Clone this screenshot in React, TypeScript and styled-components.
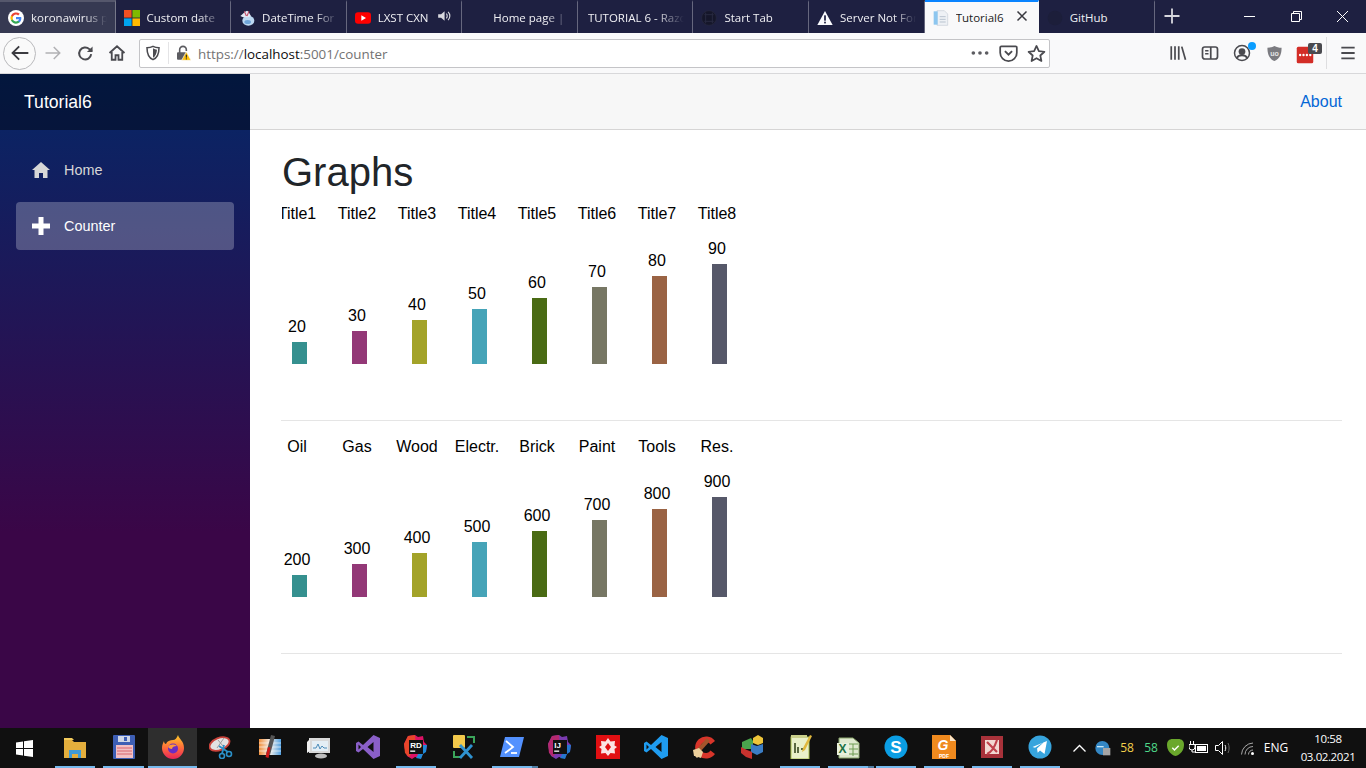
import React from "react";
import styled, { createGlobalStyle } from "styled-components";

const Global = createGlobalStyle`
  html, body { margin: 0; padding: 0; overflow: hidden; background: #fff; }
  * { box-sizing: border-box; }
`;

const Shell = styled.div`
  width: 1366px; height: 768px; display: flex; flex-direction: column; overflow: hidden;
  font-family: "Liberation Sans", Arial, sans-serif;
`;

/* ---------- browser tab strip ---------- */
const TabStrip = styled.div`
  height: 33px; display: flex; background: #1e2041; flex: none;
  font-family: "Open Sans", "Noto Sans", sans-serif; font-size: 11.5px;
`;
const Tab = styled.div<{ $active?: boolean; $hover?: boolean; $width?: number; $plain?: boolean }>`
  width: ${p => p.$width ?? 115.6}px; flex: none; height: 33px; display: flex; align-items: center;
  gap: 7px; padding-left: ${p => (p.$plain ? 10 : 8)}px; position: relative;
  color: ${p => (p.$active ? "#1c1b22" : "#f0f0f4")};
  background: ${p => (p.$active ? "#f9f9fa" : p.$hover ? "#363952" : "transparent")};
  border-right: 1px solid ${p => (p.$active ? "transparent" : "rgba(255,255,255,.32)")};
  border-top: 2px solid ${p => (p.$active ? "#0a84ff" : p.$hover ? "#55576c" : "transparent")};
`;
const TabTitle = styled.span<{ $fade?: boolean }>`
  white-space: nowrap; overflow: hidden; flex: 1; min-width: 0; margin-right: 8px;
  ${p => p.$fade && "mask-image: linear-gradient(90deg,#000 70%,transparent 100%);"}
`;
const FaviconBox = styled.span`
  width: 16px; height: 16px; flex: none; display: flex; align-items: center; justify-content: center;
`;
const CloseMark = styled.span`
  position: absolute; right: 10px; top: 8px; display: flex;
`;
const StripRest = styled.div`
  flex: 1; display: flex; align-items: center; color: #f0f0f4;
`;
const NewTab = styled.div`
  width: 34px; display: flex; justify-content: center; padding-bottom: 1px;
`;
const WinButtons = styled.div`
  margin-left: auto; display: flex;
`;
const WinBtn = styled.div`
  width: 46.5px; height: 33px; display: flex; align-items: center; justify-content: center; padding-bottom: 1px;
`;

/* ---------- toolbar ---------- */
const Toolbar = styled.div`
  height: 41px; flex: none; display: flex; align-items: center; background: #f9f9fa;
  border-bottom: 1px solid #d8d8da; padding-left: 3px;
`;
const BackBtn = styled.div`
  width: 33px; height: 33px; border-radius: 50%; border: 1px solid #b9b9bc; background: #fafafa;
  display: flex; align-items: center; justify-content: center; flex: none; margin-right: 1px;
`;
const ToolBtn = styled.div`
  width: 32px; height: 32px; flex: none; display: flex; align-items: center; justify-content: center; position: relative;
`;
const UrlBar = styled.div`
  width: 911px; height: 29px; margin-left: 6px; margin-right: 112px; flex: none; display: flex; align-items: center;
  background: #fff; border: 1px solid #c4c4c7; border-radius: 2px; padding-left: 5px;
  font-family: "Open Sans", "Noto Sans", sans-serif; font-size: 13.4px; color: #737373;
`;
const UrlDivider = styled.span`
  width: 1px; height: 22px; background: #e4e4e6; margin: 0 6px 0 7px; flex: none;
`;
const UrlText = styled.div`
  margin-left: 7px; flex: 1; white-space: nowrap; padding-top: 1px;
  b { color: #0c0c0d; font-weight: 400; }
`;
const UrlEnd = styled.div`
  display: flex; align-items: center; gap: 9px; padding-right: 3px;
`;
const ToolSep = styled.span`
  width: 1px; height: 32px; background: #dedee0; margin: 0 5px 0 4px; flex: none;
`;
const BadgeCount = styled.span`
  position: absolute; left: 18px; top: 6px; width: 14px; height: 11px; background: #4a4a4f; color: #fff;
  font: bold 10px/11px "Liberation Sans", sans-serif; text-align: center; border-radius: 2px;
`;
const AccountDot = styled.span`
  position: absolute; right: 2px; top: 5px; width: 8px; height: 8px; border-radius: 50%; background: #0a9dff;
`;

/* ---------- blazor page ---------- */
const Page = styled.div`
  flex: 1; display: flex; min-height: 0;
`;
const Sidebar = styled.aside`
  width: 250px; flex: none; background: linear-gradient(180deg, rgb(5,39,103) 0%, #3a0647 70%);
`;
const Brand = styled.div`
  height: 56px; background: rgba(0,0,0,.4); color: #fff; font-size: 17.6px; display: flex; align-items: center; padding-left: 24px;
`;
const Nav = styled.nav`
  padding: 16px 16px 0;
`;
const NavLink = styled.a<{ $active?: boolean }>`
  height: 48px; margin-bottom: 8px; display: flex; align-items: center; border-radius: 4px;
  padding-left: 16px; font-size: 14.4px;
  color: ${p => (p.$active ? "#fff" : "#d7d7d7")};
  background: ${p => (p.$active ? "rgba(255,255,255,.25)" : "transparent")};
`;
const NavIcon = styled.span`
  width: 20px; margin-right: 12px; display: flex; justify-content: flex-start; flex: none;
`;
const Main = styled.main`
  flex: 1; min-width: 0; display: flex; flex-direction: column;
`;
const TopRow = styled.div`
  height: 56px; flex: none; background: #f7f7f7; border-bottom: 1px solid #d6d5d5; display: flex;
  align-items: center; justify-content: flex-end; padding-right: 24px;
`;
const AboutLink = styled.a`
  color: #0366d6; font-size: 16px;
`;
const Content = styled.div`
  padding: 17.6px 24px 0 32px;
`;
const Title = styled.h1`
  margin: 0 0 8px; font-size: 40px; line-height: 48px; font-weight: 400; color: #212529;
`;
const ChartSvg = styled.svg`
  display: block; width: 600px; height: 200px; overflow: hidden;
  font-family: "Liberation Sans", Arial, sans-serif; font-size: 16px; fill: #000;
`;
const Rule = styled.hr`
  margin: 16px 0 16px -1px; border: 0; border-top: 1px solid rgba(0,0,0,.1); height: 0;
`;

/* ---------- taskbar ---------- */
const Taskbar = styled.div`
  height: 40px; flex: none; display: flex; background: #101010; color: #fff;
  font-family: "Open Sans", "Noto Sans", sans-serif; font-size: 12px;
`;
const StartBtn = styled.div`
  width: 50.6px; flex: none; display: flex; align-items: center; padding-left: 16px;
`;
const Slot = styled.div<{ $w: number; $run?: boolean; $active?: boolean; $stack?: boolean }>`
  width: ${p => p.$w}px; height: 40px; flex: none; display: flex; align-items: center; justify-content: center;
  position: relative; padding-bottom: 2px;
  background: ${p => (p.$active ? "#2e2e2e" : "transparent")};
  ${p => p.$run && `&::after {
    content: ""; position: absolute; bottom: 0; height: 2px; background: #76b9ed;
    left: ${p.$active ? 0 : 4}px; right: ${p.$active ? 0 : 4}px;
  }`}
  ${p => p.$stack && `&::before {
    content: ""; position: absolute; bottom: 0; height: 2px; background: #4f7ea3;
    right: -2px; width: 7px;
  }`}
`;
const Tray = styled.div`
  margin-left: auto; display: flex; align-items: center;
`;
const TrayItem = styled.div<{ $w: number; $color?: string }>`
  width: ${p => p.$w}px; display: flex; align-items: center; justify-content: center;
  color: ${p => p.$color ?? "#fff"}; flex: none; padding-bottom: 1px;
`;
const Clock = styled.div`
  width: 60px; margin: 0 8px 0 7px; text-align: center; line-height: 18px; flex: none; white-space: nowrap;
  font-size: 11.5px; letter-spacing: -0.4px;
`;

/* ---------- icons ---------- */
type SvgP = { s?: number; c?: string };
const I: React.FC<React.SVGProps<SVGSVGElement> & { s?: number }> = ({ s = 16, children, ...r }) => (
  <svg width={s} height={s} viewBox="0 0 24 24" fill="none" {...r}>{children}</svg>
);

const GoogleIcon = () => (
  <I s={16}>
    <circle cx="12" cy="12" r="12" fill="#fff" />
    <path d="M20 12.2c0-.6-.1-1.2-.2-1.7H12v3.3h4.5a3.9 3.9 0 0 1-1.7 2.5v2.1h2.7c1.6-1.5 2.5-3.6 2.5-6.2z" fill="#4285f4" />
    <path d="M12 20.5c2.3 0 4.2-.8 5.5-2.1l-2.7-2.1c-.7.5-1.7.8-2.8.8-2.2 0-4-1.5-4.7-3.4H4.5v2.1A8.5 8.5 0 0 0 12 20.5z" fill="#34a853" />
    <path d="M7.3 13.7a5 5 0 0 1 0-3.4V8.2H4.5a8.5 8.5 0 0 0 0 7.6z" fill="#fbbc05" />
    <path d="M12 6.9c1.2 0 2.3.4 3.2 1.2l2.4-2.4A8.5 8.5 0 0 0 4.5 8.2l2.8 2.1C8 8.4 9.8 6.9 12 6.9z" fill="#ea4335" />
  </I>
);
const MsIcon = () => (
  <I s={16}>
    <rect x="0" y="0" width="11.4" height="11.4" fill="#f25022" />
    <rect x="12.6" y="0" width="11.4" height="11.4" fill="#7fba00" />
    <rect x="0" y="12.6" width="11.4" height="11.4" fill="#00a4ef" />
    <rect x="12.6" y="12.6" width="11.4" height="11.4" fill="#ffb900" />
  </I>
);
const BlobIcon = () => (
  <I s={16}>
    <ellipse cx="14" cy="16" rx="9" ry="7.500" fill="#bcd8f2" />
    <path d="M2 9c3-2 6-7 10-8 3 1 4 5 6 8-3 2-12 3-16 0z" fill="#e3e8f4" />
    <path d="M8 2l3 7M15 2l-3 7" stroke="#c4506a" strokeWidth="1.600" />
    <ellipse cx="13" cy="18" rx="5" ry="3" fill="#6fa5d9" />
  </I>
);
const YoutubeIcon = () => (
  <I s={16}>
    <rect x="0" y="3.500" width="24" height="17" rx="4.500" fill="#f00" />
    <path d="M9.500 8l7 4-7 4z" fill="#fff" />
  </I>
);
const SpeakerTab = () => (
  <I s={14} style={{ position: "absolute", left: 90, top: 7 }}>
    <path d="M2 9h5l6-5v16l-6-5H2z" fill="#d8d8de" />
    <path d="M16 8c2 2 2 6 0 8M19 5c4 4 4 10 0 14" stroke="#d8d8de" strokeWidth="2" />
  </I>
);
const DarkGlobe = () => (
  <I s={16}>
    <circle cx="12" cy="12" r="11" fill="#15162a" stroke="#282a40" />
    <path d="M5 7h14M5 17h14M7 4v16M17 4v16" stroke="#282a40" strokeWidth="1.500" />
  </I>
);
const GhostMark = () => (
  <I s={16}>
    <circle cx="12" cy="12" r="11" fill="#1c1e3a" />
  </I>
);
const WarnIcon = () => (
  <I s={16}>
    <path d="M12 1.500L23.500 22.500H.5z" fill="#fbfbfe" strokeLinejoin="round" />
    <rect x="10.700" y="8" width="2.600" height="8" fill="#1e2041" />
    <rect x="10.700" y="17.500" width="2.600" height="2.600" fill="#1e2041" />
  </I>
);
const DocIcon = () => (
  <I s={16}>
    <path d="M6 1h11l5 5v17H6z" fill="#eef1f5" stroke="#c7ced8" />
    <rect x="1" y="2" width="6" height="20" fill="#8dc6ef" />
    <path d="M10 10h9M10 14h9M10 18h9" stroke="#b9c3cf" strokeWidth="1.500" />
  </I>
);
const CloseX: React.FC<SvgP> = ({ s = 12, c = "#3a3a40" }) => (
  <I s={s}><path d="M3 3l18 18M21 3L3 21" stroke={c} strokeWidth="3" /></I>
);
const PlusMark = () => (
  <I s={18}><path d="M12 2v20M2 12h20" stroke="#d7d7de" strokeWidth="2.400" /></I>
);
const MinMark = () => (
  <svg width="11" height="11" viewBox="0 0 11 11"><path d="M0 5.500h11" stroke="#fff" /></svg>
);
const RestoreMark = () => (
  <svg width="11" height="11" viewBox="0 0 11 11" fill="none"><path d="M.5 2.500h8v8h-8zM2.500 2.500v-2h8v8h-2" stroke="#fff" /></svg>
);
const WinClose = () => (
  <svg width="11" height="11" viewBox="0 0 11 11" fill="none"><path d="M0 0l11 11M11 0L0 11" stroke="#fff" /></svg>
);

const stroke = "#4a4a4f";
const BackArrow = () => (
  <I s={20}><path d="M22 12H3M11 4l-8 8 8 8" stroke="#3b3b40" strokeWidth="2.200" /></I>
);
const ForwardArrow = () => (
  <I s={18}><path d="M2 12h19M13 4l8 8-8 8" stroke="#b1b1b4" strokeWidth="2" /></I>
);
const Reload = () => (
  <I s={17}>
    <path d="M20 13a8.500 8.500 0 1 1-2.600-7.200L21 9" stroke={stroke} strokeWidth="2.800" />
    <path d="M22 2v8h-8z" fill={stroke} />
  </I>
);
const HomeGlyph = () => (
  <I s={18}>
    <path d="M2 12L12 3l10 9M5 10.500V21h5v-6h4v6h5V10.500" stroke={stroke} strokeWidth="2.400" />
  </I>
);
const ShieldOutline = () => (
  <I s={16}>
    <path d="M12 2c3 1.500 6 2 9 2 0 8-2 15-9 18C5 19 3 12 3 4c3 0 6-.5 9-2z" stroke={stroke} strokeWidth="2.300" />
    <path d="M12 5v14c4-2 5.500-7 6-12-2 0-4-1-6-2z" fill={stroke} />
  </I>
);
const LockWarn = () => (
  <I s={16}>
    <path d="M7 12V7a5 5 0 0 1 10 0v2" stroke="#5c5c61" strokeWidth="2.400" />
    <rect x="3" y="11" width="14" height="11" rx="1.500" fill="#5c5c61" />
    <path d="M17 10l7 13H10z" fill="#ffc10a" stroke="#f9f9fa" />
    <rect x="16.200" y="14.500" width="1.600" height="4.500" fill="#222" />
    <rect x="16.200" y="20" width="1.600" height="1.600" fill="#222" />
  </I>
);
const Dots = () => (
  <I s={20}>
    <circle cx="4" cy="12" r="2.200" fill="#5c5c61" />
    <circle cx="12" cy="12" r="2.200" fill="#5c5c61" />
    <circle cx="20" cy="12" r="2.200" fill="#5c5c61" />
  </I>
);
const Pocket = () => (
  <I s={19}>
    <path d="M3 3h18a1.500 1.500 0 0 1 1.500 1.500V11a10.500 10.500 0 0 1-21 0V4.500A1.500 1.500 0 0 1 3 3z" stroke={stroke} strokeWidth="2.200" />
    <path d="M7.500 9l4.500 4.500L16.500 9" stroke={stroke} strokeWidth="2.400" />
  </I>
);
const Star = () => (
  <I s={19}>
    <path d="M12 2.500l3 6.500 7 .8-5.200 4.700 1.400 7-6.200-3.600-6.200 3.600 1.400-7L2 9.800 9 9z" stroke={stroke} strokeWidth="2.200" strokeLinejoin="round" />
  </I>
);
const Library = () => (
  <I s={18}>
    <path d="M3 3v18M8 3v18M13 3v18" stroke={stroke} strokeWidth="2.300" />
    <path d="M17 3.500l5 17.500" stroke={stroke} strokeWidth="2.300" />
  </I>
);
const SidebarGlyph = () => (
  <I s={18}>
    <rect x="2" y="4" width="20" height="16" rx="3" stroke={stroke} strokeWidth="2.300" />
    <path d="M13 4v16" stroke={stroke} strokeWidth="2.300" />
    <path d="M5.500 9h4.500M5.500 13h4.500" stroke={stroke} strokeWidth="2" />
  </I>
);
const Account = () => (
  <I s={18}>
    <circle cx="12" cy="12" r="10" stroke={stroke} strokeWidth="2" />
    <circle cx="12" cy="10" r="4.500" fill={stroke} />
    <path d="M5 19c2-5.500 12-5.500 14 0" stroke={stroke} strokeWidth="2.600" />
  </I>
);
const UBlock = () => (
  <I s={17}>
    <path d="M12 1.500c3 1.500 6 2.500 10 2.500 0 8-2 15.500-10 18.500C4 19.500 2 12 2 4c4 0 7-1 10-2.500z" fill="#7b7b80" />
    <text x="12" y="15" textAnchor="middle" fill="#e4e4e4" fontSize="10" fontWeight="bold" fontFamily="Liberation Sans">uo</text>
  </I>
);
const RedDots = () => (
  <I s={18} style={{ marginLeft: -2, marginTop: 4 }}>
    <rect x="1" y="1" width="22" height="22" rx="2" fill="#d32d27" />
    <circle cx="5.500" cy="12" r="1.600" fill="#fff" />
    <circle cx="10" cy="12" r="1.600" fill="#fff" />
    <circle cx="14.500" cy="12" r="1.600" fill="#fff" />
    <circle cx="19" cy="12" r="1.600" fill="#fff" />
  </I>
);
const Burger = () => (
  <I s={16}><path d="M2 4h20M2 12h20M2 20h20" stroke={stroke} strokeWidth="2.800" /></I>
);

const HomeFill = () => (
  <svg width="18" height="16" viewBox="0 0 18 16">
    <path d="M9 0L0 8h2.500v8h4.500v-5h4v5h4.500V8H18z" fill="#d7d7d7" />
  </svg>
);
const PlusFill = () => (
  <svg width="18" height="18" viewBox="0 0 18 18">
    <path d="M6.500 0h5v6.500H18v5h-6.500V18h-5v-6.500H0v-5h6.500z" fill="#fff" />
  </svg>
);

/* taskbar app icons */
const T: React.FC<{ children: React.ReactNode; s?: number }> = ({ children, s = 24 }) => (
  <svg width={s} height={s} viewBox="0 0 24 24" fill="none">{children}</svg>
);
const WinLogo = () => (
  <svg width="17" height="17" viewBox="0 0 17 17">
    <path d="M0 2.400l7-1v6.600H0zM8 1.200L17 0v8H8zM0 9h7v6.600l-7-1zM8 9h9v8l-9-1.200z" fill="#fff" />
  </svg>
);
const Explorer = () => (
  <T>
    <path d="M1 5h8l2 2h12v16H1z" fill="#e3ae3d" />
    <path d="M1 3h8l2 2H1z" fill="#f2ca5c" />
    <path d="M6 15h12v8h-3v-4H9v4H6z" fill="#3f9ad6" />
  </T>
);
const SaveDisk = () => (
  <T>
    <rect x="1" y="0" width="22" height="24" rx="1" fill="#3e5fb5" />
    <rect x="6" y="1" width="12" height="6" fill="#cfd6e6" />
    <rect x="12" y="2" width="3" height="4" fill="#3e5fb5" />
    <rect x="4" y="10" width="17" height="13" fill="#f3c0c4" />
    <path d="M5 13h15M5 16h15M5 19h15" stroke="#d8656f" />
  </T>
);
const Firefox = () => (
  <T>
    <defs>
      <linearGradient id="ffx" x1="0" y1="0" x2="0" y2="1">
        <stop offset="0" stopColor="#ffcb2b" /><stop offset=".5" stopColor="#ff7139" /><stop offset="1" stopColor="#e8245a" />
      </linearGradient>
    </defs>
    <path d="M17 0c1 4 6 6 6 13a11 11 0 0 1-22 0c0-3 1-5 2-7 0 2 1 3 2 3 1-3 4-4 7-4 2 0 4-2 5-5z" fill="url(#ffx)" />
    <circle cx="12" cy="13.500" r="5" fill="#6a2cc4" />
    <path d="M7 12c2-3 6-3 9-1-3 0-5 1-5 3-2 0-3-1-4-2z" fill="#ff9a3c" />
  </T>
);
const Snip = () => (
  <T>
    <ellipse cx="10.500" cy="9" rx="10.500" ry="6" transform="rotate(-22 10.500 9)" fill="#e2e2e2" stroke="#c9423a" strokeWidth="1.800" />
    <path d="M9 5l5 6M15 3L8 13" stroke="#9a9a9a" />
    <path d="M10 11l9 6M15 10l-2 9" stroke="#2b90c8" strokeWidth="1.800" />
    <circle cx="20" cy="19" r="2.500" stroke="#2b90c8" strokeWidth="1.600" />
    <circle cx="13" cy="21" r="2.500" stroke="#2b90c8" strokeWidth="1.600" />
  </T>
);
const Thermo = () => (
  <T>
    <defs>
      <linearGradient id="thm" x1="0" y1="0" x2="1" y2="0">
        <stop offset="0" stopColor="#f08f3c" /><stop offset=".5" stopColor="#f5f0ea" /><stop offset="1" stopColor="#4f9fe0" />
      </linearGradient>
    </defs>
    <rect x="1" y="4" width="22" height="16" fill="url(#thm)" />
    <path d="M1 8h22M1 12h22M1 16h22" stroke="#fff" strokeOpacity=".6" />
    <path d="M13 0l4 1-5 19-4-1z" fill="#555" />
    <path d="M10 12l2.500.6L10.500 23 7.500 22z" fill="#d01818" />
  </T>
);
const Monitor = () => (
  <T>
    <rect x="2" y="3" width="21" height="15" fill="#d8d8d8" />
    <rect x="5" y="6" width="16" height="10" fill="#e4eef5" />
    <path d="M6 13h3l2-4 2 5 2-3 2 2h3" stroke="#4d8cb8" />
    <ellipse cx="14" cy="21" rx="6" ry="2.500" fill="#bdbdbd" />
    <path d="M0 7l3-3v12l-3 2z" fill="#f0f0f0" />
  </T>
);
const VsShape: React.FC<{ fill: string }> = ({ fill }) => (
  <T>
    <path fillRule="evenodd" d="M17.500 0L24 3v18l-6.500 3L7 14l-4.500 3.500L0 16V8l2.500-1.500L7 10zM17.500 7l-6 5 6 5zM2.500 9.500v5L5 12z" fill={fill} />
  </T>
);
const Tile: React.FC<{ label: string; from: string; mid: string; to: string }> = ({ label, from, mid, to }) => (
  <T>
    <path d="M4 1l7-1 3 2 5-1 1 6 3 3-1 6-3 2-2 5-6-1-3 2-5-3-2-6L0 9z" fill={mid} />
    <path d="M4 1l7-1 1 12-7 10-4-4L0 9z" fill={from} />
    <path d="M19 10l4 0-1 7-3 2-2 5-5-1z" fill={to} />
    <rect x="5" y="5" width="14" height="14" fill="#111" />
    <text x="6.200" y="12.500" fontSize="8" fontWeight="bold" fill="#fff" fontFamily="Liberation Sans">{label}</text>
    <rect x="6.200" y="15.500" width="5" height="1.300" fill="#fff" />
  </T>
);
const Tools = () => (
  <T>
    <rect x="1" y="0" width="12" height="13" rx="1" fill="#f3c94b" />
    <path d="M15 2h7v6M2 16v6h6" stroke="#3ba55a" strokeWidth="2" />
    <path d="M8 10l12 13M20 10L8 23" stroke="#2f93d1" strokeWidth="2.800" />
  </T>
);
const PowerShell = () => (
  <T>
    <path d="M5 2h19l-5 20H0z" fill="#5391fe" />
    <path d="M6 6l7 6-8 6" stroke="#fff" strokeWidth="1.800" />
    <path d="M11 18h6" stroke="#fff" strokeWidth="1.800" />
  </T>
);
const Wolfram = () => (
  <T>
    <rect x="0" y="0" width="24" height="24" fill="#e10f12" />
    <path d="M12 3l2.500 3.500 4.500-.5-.5 4.500L21 12l-2.500 2 .5 4.500-4.500-.5L12 21l-2.500-3-4.500.5.500-4.500L3 12l2.500-1.500L5 6l4.500.5z" fill="#fbe4e4" />
    <path d="M12 8l3 4-3 4-3-4z" fill="#e10f12" />
  </T>
);
const CCleaner = () => (
  <T>
    <path d="M23 6A11 11 0 1 0 23 19l-4.500-3.500a5.500 5.500 0 1 1 0-6z" fill="#d8352a" />
    <path d="M15 3L5 14l3 3L18 6z" fill="#a5552c" />
    <path d="M1 15l6-2 4 4-2 6-3-1-1 1-2-2-1 0z" fill="#eccf9c" />
  </T>
);
const Cubes = () => (
  <T>
    <path d="M2 7l9-4 2 3v8H2z" fill="#4aa54d" />
    <path d="M13 3l5-3 5 3v5l-5 2-5-2z" fill="#eec53a" />
    <path d="M11 9l6 2 6-2v8l-6 3-6-3z" fill="#3b7dc4" />
    <path d="M1 12l6 3 5 2v7l-6-2-5-4z" fill="#c8322e" />
  </T>
);
const Notepad = () => (
  <T>
    <rect x="3" y="2" width="18" height="22" fill="#e9f0c9" stroke="#a9bf4d" />
    <rect x="3" y="0" width="16" height="3" fill="#c9cf8a" />
    <path d="M7 8v10M10 12v6M13 14h4" stroke="#2c3c14" strokeWidth="1.500" />
    <path d="M22 0l2 1-7 14-3 2 1-4z" fill="#e1b93e" />
  </T>
);
const Excel = () => (
  <T>
    <path d="M3 3h14l6 5v15H3z" fill="#dfe9cf" stroke="#8ba66c" />
    <path d="M12 9h10M12 14h10M12 19h10M17 9v12" stroke="#6f9c52" />
    <rect x="1" y="8" width="12" height="12" fill="#e8f1dc" />
    <text x="2.500" y="18" fontSize="12" fontWeight="bold" fill="#207245" fontFamily="Liberation Sans">X</text>
  </T>
);
const Skype = () => (
  <T>
    <circle cx="12" cy="12" r="11.500" fill="#0b9ee4" />
    <text x="12" y="18" textAnchor="middle" fontSize="17" fontWeight="bold" fill="#fff" fontFamily="Liberation Sans">S</text>
  </T>
);
const Foxit = () => (
  <T>
    <path d="M0 0h18l6 6v18H0z" fill="#f08a1e" />
    <path d="M18 0l6 6h-6z" fill="#fbe5c8" />
    <text x="11" y="15" textAnchor="middle" fontSize="14" fontWeight="bold" fontStyle="italic" fill="#fff" fontFamily="Liberation Sans">G</text>
    <text x="12" y="22.500" textAnchor="middle" fontSize="5" fontWeight="bold" fill="#fff" fontFamily="Liberation Sans">PDF</text>
  </T>
);
const Flash = () => (
  <T>
    <rect x="1" y="1" width="22" height="22" fill="#a8323a" />
    <rect x="5" y="5" width="14" height="14" fill="#f2d9d2" />
    <path d="M7 19c5-2 8-8 10-14M7 7l10 10" stroke="#c0434c" strokeWidth="2.200" />
  </T>
);
const Telegram = () => (
  <T>
    <circle cx="12" cy="12" r="11.500" fill="#37a4dd" />
    <path d="M4.500 12L19 6l-2.500 13-4.500-3.500-2.300 2.300-.7-4.300 7-6.500-9 5.700z" fill="#fff" />
  </T>
);

const TChevron = () => (
  <svg width="13" height="8" viewBox="0 0 13 8" fill="none"><path d="M.5 7.500l6-6 6 6" stroke="#fff" strokeWidth="1.300" /></svg>
);
const TrayGlobe = () => (
  <T s={16}>
    <circle cx="11" cy="12" r="10.500" fill="#3487c4" />
    <rect x="12" y="12" width="11" height="11" fill="#a5a5a5" />
    <path d="M3 10h10" stroke="#c9e6f5" strokeWidth="2" />
  </T>
);
const TrayShield = () => (
  <T s={17}>
    <path d="M8 0h8c5 0 8 3 8 8 0 8-5 14-12 16C5 22 0 16 0 8c0-5 3-8 8-8z" fill="#6aa82c" />
    <path d="M7.500 12.500l3 3 6-6" stroke="#fff" strokeWidth="2" />
  </T>
);
const TrayPower = () => (
  <svg width="20" height="14" viewBox="0 0 20 14" fill="none">
    <rect x="6.500" y="3.500" width="12" height="8" stroke="#fff" />
    <rect x="8" y="5" width="9" height="5" fill="#fff" />
    <path d="M1.500 0v3M4.500 0v3M0 3.500h6V6a3 3 0 0 1-6 0zM3 9v2h3" stroke="#fff" />
  </svg>
);
const TraySpeaker = () => (
  <svg width="16" height="16" viewBox="0 0 16 16" fill="none">
    <path d="M.5 5.500h3l4-4v13l-4-4h-3z" stroke="#fff" />
    <path d="M10 5c1 2 1 4 0 6" stroke="#fff" />
    <path d="M13 3c1.500 3 1.500 7 0 10" stroke="#666" />
  </svg>
);
const TrayWifi = () => (
  <svg width="16" height="16" viewBox="0 0 16 16" fill="none">
    <path d="M1.500 14.500A12 12 0 0 1 13 3M5 14.500A8 8 0 0 1 13 6.500M8.500 14.500A4.500 4.500 0 0 1 13 10" stroke="#a8a8a8" />
    <circle cx="12.500" cy="13.500" r="1.500" fill="#fff" />
  </svg>
);

/* ---------- data ---------- */
const COLORS = ["#35908f", "#933877", "#a3a329", "#46a4b8", "#4a6b14", "#777764", "#9a6344", "#565869"];
const HEIGHTS = [22, 33, 44, 55, 66, 77, 88, 100];

type Graph = { titles: string[]; values: number[] };
const GRAPHS: Graph[] = [
  { titles: ["Title1", "Title2", "Title3", "Title4", "Title5", "Title6", "Title7", "Title8"], values: [20, 30, 40, 50, 60, 70, 80, 90] },
  { titles: ["Oil", "Gas", "Wood", "Electr.", "Brick", "Paint", "Tools", "Res."], values: [200, 300, 400, 500, 600, 700, 800, 900] },
];

const BarChart: React.FC<{ graph: Graph }> = ({ graph }) => (
  <ChartSvg viewBox="0 0 600 200">
    {graph.titles.map((t, i) => {
      const x = 15 + 60 * i;
      const h = HEIGHTS[i];
      return (
        <g key={t}>
          <text x={x} y={15} textAnchor="middle">{t}</text>
          <rect x={x - 5} y={160 - h} width={15} height={h} fill={COLORS[i]} />
          <text x={x} y={150 - h} textAnchor="middle">{graph.values[i]}</text>
        </g>
      );
    })}
  </ChartSvg>
);

const TABS: { title: string; icon?: React.ReactNode; plain?: boolean; extra?: React.ReactNode; hover?: boolean; width?: number }[] = [
  { title: "koronawirus p", icon: <GoogleIcon />, hover: true, width: 115.5 },
  { title: "Custom date", icon: <MsIcon /> },
  { title: "DateTime For", icon: <BlobIcon /> },
  { title: "LXST CXN", icon: <YoutubeIcon />, extra: <SpeakerTab /> },
  { title: "Home page |", icon: <FaviconBox /> },
  { title: "TUTORIAL 6 - Razo", plain: true },
  { title: "Start Tab", icon: <DarkGlobe /> },
  { title: "Server Not For", icon: <WarnIcon /> },
];

const APPS_A: { node: React.ReactNode; run?: boolean; active?: boolean }[] = [
  { node: <Explorer />, run: true },
  { node: <SaveDisk />, run: true },
  { node: <Firefox />, run: true, active: true },
  { node: <Snip /> },
  { node: <Thermo /> },
  { node: <Monitor /> },
  { node: <VsShape fill="#8a5fc8" /> },
];
const APPS_B: { node: React.ReactNode; run?: boolean; stack?: boolean }[] = [
  { node: <Tile label="RD" from="#e8462a" mid="#dd1265" to="#1f8ad8" />, run: true },
  { node: <Tools /> },
  { node: <PowerShell />, run: true, stack: true },
  { node: <Tile label="IJ" from="#b5296f" mid="#7a3bb0" to="#2577cf" /> },
  { node: <Wolfram /> },
  { node: <VsShape fill="#1f9cf0" /> },
  { node: <CCleaner /> },
  { node: <Cubes /> },
  { node: <Notepad />, run: true },
  { node: <Excel />, run: true, stack: true },
  { node: <Skype />, run: true },
  { node: <Foxit />, run: true },
  { node: <Flash />, run: true },
  { node: <Telegram />, run: true },
];

export default function App() {
  return (
    <Shell>
      <Global />
      <TabStrip>
        {TABS.map(t => (
          <Tab key={t.title} $hover={t.hover} $plain={t.plain} $width={t.width}>
            {t.icon && <FaviconBox>{t.icon}</FaviconBox>}
            <TabTitle $fade>{t.title}</TabTitle>
            {t.extra}
          </Tab>
        ))}
        <Tab $active $width={114}>
          <FaviconBox><DocIcon /></FaviconBox>
          <TabTitle>Tutorial6</TabTitle>
          <CloseMark><CloseX /></CloseMark>
        </Tab>
        <Tab $width={116}>
          <FaviconBox><GhostMark /></FaviconBox>
          <TabTitle>GitHub</TabTitle>
        </Tab>
        <StripRest>
          <NewTab><PlusMark /></NewTab>
          <WinButtons>
            <WinBtn><MinMark /></WinBtn>
            <WinBtn><RestoreMark /></WinBtn>
            <WinBtn><WinClose /></WinBtn>
          </WinButtons>
        </StripRest>
      </TabStrip>

      <Toolbar>
        <BackBtn><BackArrow /></BackBtn>
        <ToolBtn><ForwardArrow /></ToolBtn>
        <ToolBtn><Reload /></ToolBtn>
        <ToolBtn><HomeGlyph /></ToolBtn>
        <UrlBar>
          <ShieldOutline />
          <UrlDivider />
          <LockWarn />
          <UrlText>https://<b>localhost</b>:5001/counter</UrlText>
          <UrlEnd>
            <Dots />
            <Pocket />
            <Star />
          </UrlEnd>
        </UrlBar>
        <ToolBtn><Library /></ToolBtn>
        <ToolBtn><SidebarGlyph /></ToolBtn>
        <ToolBtn><Account /><AccountDot /></ToolBtn>
        <ToolBtn><UBlock /></ToolBtn>
        <ToolBtn><RedDots /><BadgeCount>4</BadgeCount></ToolBtn>
        <ToolSep />
        <ToolBtn><Burger /></ToolBtn>
      </Toolbar>

      <Page>
        <Sidebar>
          <Brand>Tutorial6</Brand>
          <Nav>
            <NavLink><NavIcon><HomeFill /></NavIcon>Home</NavLink>
            <NavLink $active><NavIcon><PlusFill /></NavIcon>Counter</NavLink>
          </Nav>
        </Sidebar>
        <Main>
          <TopRow><AboutLink>About</AboutLink></TopRow>
          <Content>
            <Title>Graphs</Title>
            {GRAPHS.map(g => (
              <React.Fragment key={g.titles[0]}>
                <BarChart graph={g} />
                <Rule />
              </React.Fragment>
            ))}
          </Content>
        </Main>
      </Page>

      <Taskbar>
        <StartBtn><WinLogo /></StartBtn>
        {APPS_A.map((a, i) => (
          <Slot key={i} $w={48.8} $run={a.run} $active={a.active}>{a.node}</Slot>
        ))}
        {APPS_B.map((a, i) => (
          <Slot key={i} $w={48} $run={a.run} $stack={a.stack}>{a.node}</Slot>
        ))}
        <Tray>
          <TrayItem $w={24}><TChevron /></TrayItem>
          <TrayItem $w={24}><TrayGlobe /></TrayItem>
          <TrayItem $w={24} $color="#f2d14b">58</TrayItem>
          <TrayItem $w={24} $color="#4fd98a">58</TrayItem>
          <TrayItem $w={24}><TrayShield /></TrayItem>
          <TrayItem $w={24}><TrayPower /></TrayItem>
          <TrayItem $w={24}><TraySpeaker /></TrayItem>
          <TrayItem $w={26}><TrayWifi /></TrayItem>
          <TrayItem $w={30}>ENG</TrayItem>
          <Clock>10:58<br />03.02.2021</Clock>
        </Tray>
      </Taskbar>
    </Shell>
  );
}
